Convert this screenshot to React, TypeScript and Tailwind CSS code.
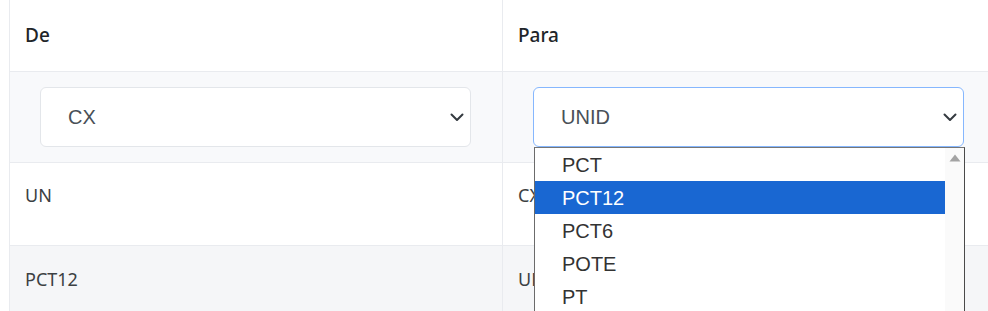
const poppins = { fontFamily: '"Noto Sans", "Open Sans", sans-serif' };

function Chevron() {
  return (
    <svg width="14" height="10" viewBox="0 0 14 10" className="shrink-0">
      <polyline points="1.5,2.5 7,8 12.5,2.5" fill="none" stroke="#343a40" strokeWidth="2" strokeLinecap="round" strokeLinejoin="round" />
    </svg>
  );
}

function Select({ value, open }: { value: string; open?: boolean }) {
  const options = ["PCT", "PCT12", "PCT6", "POTE", "PT"];
  return (
    <div className="relative">
      <div
        className={`h-[60px] rounded-[6px] border bg-white flex items-center justify-between pl-[27px] pr-[6px] ${
          open ? "border-[#86b7fe]" : "border-[#e3e6ea]"
        }`}
      >
        <span className="text-[20px] text-[#495057] font-['Liberation_Sans',Arial,sans-serif]">{value}</span>
        <Chevron />
      </div>
      {open && (
        <div className="absolute left-[1px] top-full w-[431px] h-[170px] bg-white border border-[#4a4a4a] border-t-[#767676] border-l-[#6b6b6b] flex overflow-hidden z-10">
          <div className="flex-1 flex flex-col">
            {options.map((o) => (
              <div
                key={o}
                className={`h-[33px] shrink-0 flex items-center pl-[27px] text-[20px] font-['Liberation_Sans',Arial,sans-serif] ${
                  o === "PCT12" ? "bg-[#1967d2] text-white" : "text-[#333]"
                }`}
              >
                {o}
              </div>
            ))}
          </div>
          <div className="w-[19px] bg-[#fafafa] flex justify-center pt-[6px]">
            <svg width="12" height="8" viewBox="0 0 12 8">
              <polygon points="6,0.5 11.5,7.5 0.5,7.5" fill="#a3a3a3" />
            </svg>
          </div>
        </div>
      )}
    </div>
  );
}

export default function App() {
  const cell = "border-l border-[#e9ebef]";
  return (
    <div className="w-[988px] h-[311px] overflow-hidden bg-white pl-[9px]" style={poppins}>
      <div className="w-[986px] border-l border-[#e9ebef]">
        {/* Header */}
        <div className="grid grid-cols-[492px_493px] h-[72px] border-b border-[#e9ebef] text-[19px] font-medium text-[#212529]">
          <div className="flex items-center pl-[15px]">De</div>
          <div className={`${cell} flex items-center pl-[15px]`}>Para</div>
        </div>

        {/* Filter row */}
        <div className="grid grid-cols-[492px_493px] h-[91px] border-b border-[#e9ebef] bg-[#f8f9fb]">
          <div className="pt-[15px] pl-[30px] pr-[31px]">
            <Select value="CX" />
          </div>
          <div className={`${cell} pt-[15px] pl-[30px] pr-[31px] relative z-10`}>
            <Select value="UNID" open />
          </div>
        </div>

        {/* Rows */}
        <div className="grid grid-cols-[492px_493px] h-[83px] border-b border-[#e9ebef] bg-white text-[18px] text-[#3c4043]">
          <div className="flex items-center pl-[15px] -mt-[18px]">UN</div>
          <div className={`${cell} flex items-center pl-[15px] -mt-[18px]`}>CX</div>
        </div>
        <div className="grid grid-cols-[492px_493px] h-[80px] bg-[#f5f6f8] text-[18px] text-[#3c4043]">
          <div className="flex items-center pl-[15px] -mt-[14px]">PCT12</div>
          <div className={`${cell} flex items-center pl-[15px] -mt-[14px]`}>UN</div>
        </div>
      </div>
    </div>
  );
}
